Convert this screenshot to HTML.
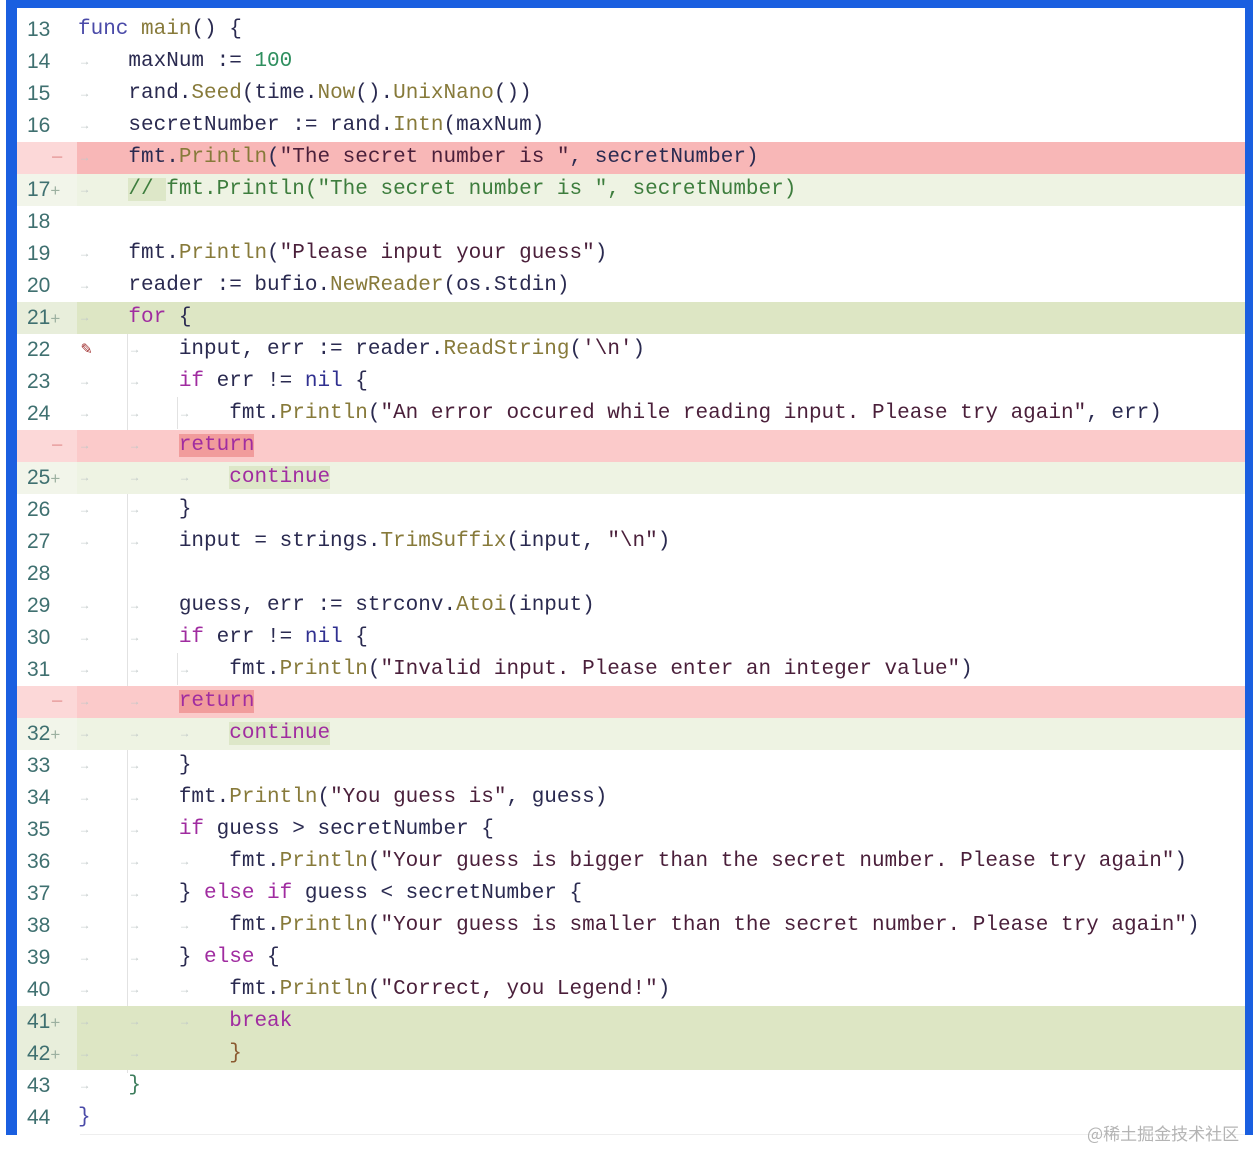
<!DOCTYPE html>
<html><head><meta charset="utf-8"><style>
html,body{margin:0;padding:0;background:#fff;width:1253px;height:1151px;overflow:hidden;position:relative}
.bl{position:absolute;background:#1a5fe0}
.inner{position:absolute;left:17px;top:8px;width:1228px;height:1127px;background:#fff;overflow:hidden}
.row{position:absolute;left:0;width:1228px;height:32px;font-family:"Liberation Mono",monospace;font-size:21px;line-height:32px;color:#2a2a50}
.num{position:absolute;left:10px;top:0;color:#3f7070;font-family:"Liberation Sans",sans-serif;font-size:21px}
.num .p{color:#9cb0a0;font-size:17px}
.code{position:absolute;left:61px;top:0;white-space:pre}
.ar{position:absolute;top:0;color:#c0c8c8;font-size:12px}
.g{position:absolute;left:0;top:0;height:32px;width:60px}
.r{background:#f8b7b7}.r .g{background:#fcd8d8}
.lg{background:#eef3e3}.lg .g{background:#f2f5ea}
.dg{background:#dde6c4}.dg .g{background:#e8eedb}
.hl{background:#f19c9c}.hg{background:#dde7c8}
.k{color:#a02ca0}.f{color:#4a4aa8}.fn{color:#877a3a}.s{color:#4a1f3a}.n{color:#2f8f5f}.nil{color:#303090}
.cm,.cm span{color:#3d7d3d}
.guide{position:absolute;width:1px;background:#e2e2e2}
.wm{position:absolute;left:1087px;top:1120px;font-family:"Noto Sans CJK SC",sans-serif;font-size:17px;color:#b4b4b4}
#rows{position:absolute;left:0;top:3px;width:1228px;height:1124px}
</style></head><body>
<div class="bl" style="left:6px;top:0;width:1247px;height:8px"></div>
<div class="bl" style="left:6px;top:0;width:11px;height:1135px"></div>
<div class="bl" style="left:1245px;top:0;width:8px;height:1135px"></div>
<div class="inner"><div id="rows">
<div class="guide" style="left:110px;top:322px;height:740px"></div>
<div class="guide" style="left:160px;top:386px;height:32px"></div>
<div class="guide" style="left:160px;top:642px;height:32px"></div>
<div class="row" style="top:3px"><span class="num">13</span><span class="code"><span class="f">func</span> <span class="fn">main</span>() {</span></div>
<div class="row" style="top:35px"><span class="num">14</span><span class="ar" style="left:64px">→</span><span class="code">    maxNum := <span class="n">100</span></span></div>
<div class="row" style="top:67px"><span class="num">15</span><span class="ar" style="left:64px">→</span><span class="code">    rand.<span class="fn">Seed</span>(time.<span class="fn">Now</span>().<span class="fn">UnixNano</span>())</span></div>
<div class="row" style="top:99px"><span class="num">16</span><span class="ar" style="left:64px">→</span><span class="code">    secretNumber := rand.<span class="fn">Intn</span>(maxNum)</span></div>
<div class="row r" style="top:131px"><span class="g"></span><span class="num" style="left:34px;color:#e8a0a0">−</span><span class="ar" style="left:64px">→</span><span class="code">    fmt.<span class="fn">Println</span>(<span class="s">"The secret number is "</span>, secretNumber)</span></div>
<div class="row lg" style="top:163px"><span class="g"></span><span class="num">17<span class="p">+</span></span><span class="ar" style="left:64px">→</span><span class="code cm">    <span class="hg">// </span>fmt.Println("The secret number is ", secretNumber)</span></div>
<div class="row" style="top:195px"><span class="num">18</span></div>
<div class="row" style="top:227px"><span class="num">19</span><span class="ar" style="left:64px">→</span><span class="code">    fmt.<span class="fn">Println</span>(<span class="s">"Please input your guess"</span>)</span></div>
<div class="row" style="top:259px"><span class="num">20</span><span class="ar" style="left:64px">→</span><span class="code">    reader := bufio.<span class="fn">NewReader</span>(os.Stdin)</span></div>
<div class="row dg" style="top:291px"><span class="g"></span><span class="num">21<span class="p">+</span></span><span class="ar" style="left:64px">→</span><span class="code">    <span class="k">for</span> {</span></div>
<div class="row" style="top:323px"><span class="num">22</span><span class="ar" style="left:64px;color:#a03030;font-size:18px">✎</span><span class="ar" style="left:114px">→</span><span class="code">        input, err := reader.<span class="fn">ReadString</span>(<span class="s">'\n'</span>)</span></div>
<div class="row" style="top:355px"><span class="num">23</span><span class="ar" style="left:64px">→</span><span class="ar" style="left:114px">→</span><span class="code">        <span class="k">if</span> err != <span class="nil">nil</span> {</span></div>
<div class="row" style="top:387px"><span class="num">24</span><span class="ar" style="left:64px">→</span><span class="ar" style="left:114px">→</span><span class="ar" style="left:164px">→</span><span class="code">            fmt.<span class="fn">Println</span>(<span class="s">"An error occured while reading input. Please try again"</span>, err)</span></div>
<div class="row r" style="top:419px;background:#fbcaca"><span class="g"></span><span class="num" style="left:34px;color:#e8a0a0">−</span><span class="ar" style="left:64px">→</span><span class="ar" style="left:114px">→</span><span class="code">        <span class="k hl">return</span></span></div>
<div class="row lg" style="top:451px"><span class="g"></span><span class="num">25<span class="p">+</span></span><span class="ar" style="left:64px">→</span><span class="ar" style="left:114px">→</span><span class="ar" style="left:164px">→</span><span class="code">            <span class="k hg">continue</span></span></div>
<div class="row" style="top:483px"><span class="num">26</span><span class="ar" style="left:64px">→</span><span class="ar" style="left:114px">→</span><span class="code">        }</span></div>
<div class="row" style="top:515px"><span class="num">27</span><span class="ar" style="left:64px">→</span><span class="ar" style="left:114px">→</span><span class="code">        input = strings.<span class="fn">TrimSuffix</span>(input, <span class="s">"\n"</span>)</span></div>
<div class="row" style="top:547px"><span class="num">28</span></div>
<div class="row" style="top:579px"><span class="num">29</span><span class="ar" style="left:64px">→</span><span class="ar" style="left:114px">→</span><span class="code">        guess, err := strconv.<span class="fn">Atoi</span>(input)</span></div>
<div class="row" style="top:611px"><span class="num">30</span><span class="ar" style="left:64px">→</span><span class="ar" style="left:114px">→</span><span class="code">        <span class="k">if</span> err != <span class="nil">nil</span> {</span></div>
<div class="row" style="top:643px"><span class="num">31</span><span class="ar" style="left:64px">→</span><span class="ar" style="left:114px">→</span><span class="ar" style="left:164px">→</span><span class="code">            fmt.<span class="fn">Println</span>(<span class="s">"Invalid input. Please enter an integer value"</span>)</span></div>
<div class="row r" style="top:675px;background:#fbcaca"><span class="g"></span><span class="num" style="left:34px;color:#e8a0a0">−</span><span class="ar" style="left:64px">→</span><span class="ar" style="left:114px">→</span><span class="code">        <span class="k hl">return</span></span></div>
<div class="row lg" style="top:707px"><span class="g"></span><span class="num">32<span class="p">+</span></span><span class="ar" style="left:64px">→</span><span class="ar" style="left:114px">→</span><span class="ar" style="left:164px">→</span><span class="code">            <span class="k hg">continue</span></span></div>
<div class="row" style="top:739px"><span class="num">33</span><span class="ar" style="left:64px">→</span><span class="ar" style="left:114px">→</span><span class="code">        }</span></div>
<div class="row" style="top:771px"><span class="num">34</span><span class="ar" style="left:64px">→</span><span class="ar" style="left:114px">→</span><span class="code">        fmt.<span class="fn">Println</span>(<span class="s">"You guess is"</span>, guess)</span></div>
<div class="row" style="top:803px"><span class="num">35</span><span class="ar" style="left:64px">→</span><span class="ar" style="left:114px">→</span><span class="code">        <span class="k">if</span> guess &gt; secretNumber {</span></div>
<div class="row" style="top:835px"><span class="num">36</span><span class="ar" style="left:64px">→</span><span class="ar" style="left:114px">→</span><span class="ar" style="left:164px">→</span><span class="code">            fmt.<span class="fn">Println</span>(<span class="s">"Your guess is bigger than the secret number. Please try again"</span>)</span></div>
<div class="row" style="top:867px"><span class="num">37</span><span class="ar" style="left:64px">→</span><span class="ar" style="left:114px">→</span><span class="code">        } <span class="k">else if</span> guess &lt; secretNumber {</span></div>
<div class="row" style="top:899px"><span class="num">38</span><span class="ar" style="left:64px">→</span><span class="ar" style="left:114px">→</span><span class="ar" style="left:164px">→</span><span class="code">            fmt.<span class="fn">Println</span>(<span class="s">"Your guess is smaller than the secret number. Please try again"</span>)</span></div>
<div class="row" style="top:931px"><span class="num">39</span><span class="ar" style="left:64px">→</span><span class="ar" style="left:114px">→</span><span class="code">        } <span class="k">else</span> {</span></div>
<div class="row" style="top:963px"><span class="num">40</span><span class="ar" style="left:64px">→</span><span class="ar" style="left:114px">→</span><span class="ar" style="left:164px">→</span><span class="code">            fmt.<span class="fn">Println</span>(<span class="s">"Correct, you Legend!"</span>)</span></div>
<div class="row dg" style="top:995px"><span class="g"></span><span class="num">41<span class="p">+</span></span><span class="ar" style="left:64px">→</span><span class="ar" style="left:114px">→</span><span class="ar" style="left:164px">→</span><span class="code">            <span class="k">break</span></span></div>
<div class="row dg" style="top:1027px"><span class="g"></span><span class="num">42<span class="p">+</span></span><span class="ar" style="left:64px">→</span><span class="ar" style="left:114px">→</span><span class="code">            <span style="color:#8a5a30">}</span></span></div>
<div class="row" style="top:1059px"><span class="num">43</span><span class="ar" style="left:64px">→</span><span class="code">    <span style="color:#3d7d5d">}</span></span></div>
<div class="row" style="top:1091px"><span class="num">44</span><span class="code"><span style="color:#4a4aa8">}</span></span></div>
</div></div>
<div style="position:absolute;left:80px;top:1134px;width:1165px;height:1px;background:#eee"></div>
<div class="wm">@稀土掘金技术社区</div>
</body></html>
